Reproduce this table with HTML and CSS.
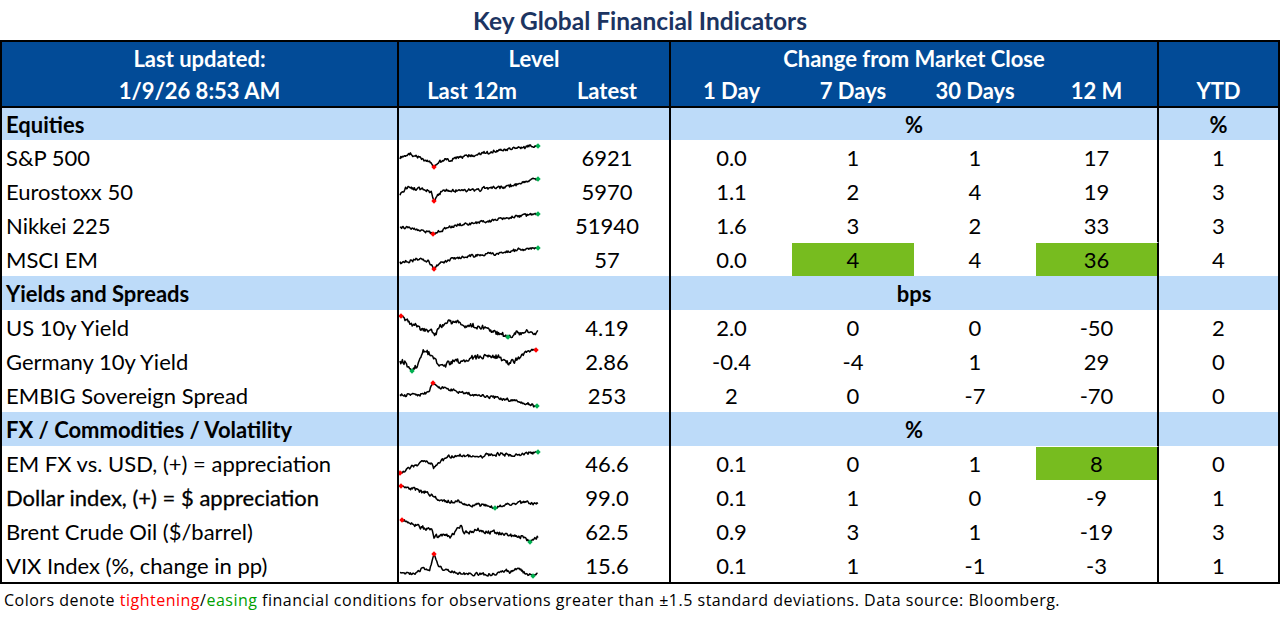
FILE: index.html
```html
<!DOCTYPE html>
<html lang="en">
<head>
<meta charset="utf-8">
<title>Key Global Financial Indicators</title>
<link rel="stylesheet" href="styles.css">
</head>
<body>
<h1 class="title">Key Global Financial Indicators</h1>
<div class="sheet">
  <div class="head">
    <div class="c br">Last updated:</div>
    <div class="c br span2">Level</div>
    <div class="c br span4">Change from Market Close</div>
    <div class="c"></div>
    <div class="c br">1/9/26 8:53 AM</div>
    <div class="c">Last 12m</div>
    <div class="c br">Latest</div>
    <div class="c">1 Day</div>
    <div class="c">7 Days</div>
    <div class="c">30 Days</div>
    <div class="c br">12 M</div>
    <div class="c">YTD</div>
  </div>

  <div class="row sec first">
    <div class="c lbl br b">Equities</div>
    <div class="c br span2"></div>
    <div class="c br span4 b">%</div>
    <div class="c b">%</div>
  </div>
  <div class="row">
    <div class="c lbl br">S&amp;P 500</div>
    <div class="c sp"><svg class="spark" width="146" height="34" data-a="0,18 11,15 23,19 29,21 34,27 38,23 44,20 64,17 91,12 118,8 138,6" data-r="34,27" data-g="138,6" data-n="1.3"></svg></div>
    <div class="c br">6921</div>
    <div class="c">0.0</div><div class="c">1</div><div class="c">1</div><div class="c br">17</div><div class="c">1</div>
  </div>
  <div class="row">
    <div class="c lbl br">Eurostoxx 50</div>
    <div class="c sp"><svg class="spark" width="146" height="34" data-a="0,22 6,14 18,14 28,16 31,18 34,27 38,20 44,16 74,17 91,14 118,11 138,5" data-r="34,27" data-g="138,5" data-n="1.5"></svg></div>
    <div class="c br">5970</div>
    <div class="c">1.1</div><div class="c">2</div><div class="c">4</div><div class="c br">19</div><div class="c">3</div>
  </div>
  <div class="row">
    <div class="c lbl br">Nikkei 225</div>
    <div class="c sp"><svg class="spark" width="146" height="34" data-a="0,19 11,20 24,23 33,26 41,22 58,17 91,13 118,8 138,6" data-r="33,26" data-g="138,6" data-n="1.3"></svg></div>
    <div class="c br">51940</div>
    <div class="c">1.6</div><div class="c">3</div><div class="c">2</div><div class="c br">33</div><div class="c">3</div>
  </div>
  <div class="row">
    <div class="c lbl br">MSCI EM</div>
    <div class="c sp"><svg class="spark" width="146" height="34" data-a="0,21 18,17 28,19 34,27 39,21 58,16 91,12 118,8 138,6" data-r="34,27" data-g="138,6" data-n="1.3"></svg></div>
    <div class="c br">57</div>
    <div class="c">0.0</div><div class="c hi">4</div><div class="c">4</div><div class="c br hi">36</div><div class="c">4</div>
  </div>

  <div class="row sec">
    <div class="c lbl br b">Yields and Spreads</div>
    <div class="c br span2"></div>
    <div class="c br span4 b">bps</div>
    <div class="c"></div>
  </div>
  <div class="row">
    <div class="c lbl br">US 10y Yield</div>
    <div class="c sp"><svg class="spark" width="146" height="34" data-a="1,6 11,13 21,18 31,20 34,25 41,15 51,12 64,15 84,18 98,23 108,27 118,23 128,22 138,22" data-r="1,6" data-g="108,27" data-n="2.2"></svg></div>
    <div class="c br">4.19</div>
    <div class="c">2.0</div><div class="c">0</div><div class="c">0</div><div class="c br">-50</div><div class="c">2</div>
  </div>
  <div class="row">
    <div class="c lbl br">Germany 10y Yield</div>
    <div class="c sp"><svg class="spark" width="146" height="34" data-a="0,18 6,19 12,27 18,21 23,6 31,11 41,23 51,18 64,16 84,13 98,13 108,19 118,13 128,8 136,6" data-r="136,6" data-g="12,27" data-n="2.2"></svg></div>
    <div class="c br">2.86</div>
    <div class="c">-0.4</div><div class="c">-4</div><div class="c">1</div><div class="c br">29</div><div class="c">0</div>
  </div>
  <div class="row">
    <div class="c lbl br">EMBIG Sovereign Spread</div>
    <div class="c sp"><svg class="spark" width="146" height="34" data-a="0,17 18,17 28,15 33,5 38,9 51,12 74,17 98,20 118,24 137,28" data-r="33,5" data-g="137,28" data-n="1.3"></svg></div>
    <div class="c br">253</div>
    <div class="c">2</div><div class="c">0</div><div class="c">-7</div><div class="c br">-70</div><div class="c">0</div>
  </div>

  <div class="row sec">
    <div class="c lbl br b">FX / Commodities / Volatility</div>
    <div class="c br span2"></div>
    <div class="c br span4 b">%</div>
    <div class="c"></div>
  </div>
  <div class="row">
    <div class="c lbl br">EM FX vs. USD, (+) = appreciation</div>
    <div class="c sp"><svg class="spark" width="146" height="34" data-a="0,27 11,21 24,16 31,17 34,23 38,16 48,11 64,9 78,11 91,9 118,9 138,6" data-r="0,27" data-g="138,6" data-n="1.4"></svg></div>
    <div class="c br">46.6</div>
    <div class="c">0.1</div><div class="c">0</div><div class="c">1</div><div class="c br hi">8</div><div class="c">0</div>
  </div>
  <div class="row">
    <div class="c lbl br semi">Dollar index, (+) = $ appreciation</div>
    <div class="c sp"><svg class="spark" width="146" height="34" data-a="1,6 18,10 31,15 41,21 58,21 74,25 84,24 95,28 108,24 121,22 138,23" data-r="1,6" data-g="95,28" data-n="1.4"></svg></div>
    <div class="c br">99.0</div>
    <div class="c">0.1</div><div class="c">1</div><div class="c">0</div><div class="c br">-9</div><div class="c">1</div>
  </div>
  <div class="row">
    <div class="c lbl br">Brent Crude Oil ($/barrel)</div>
    <div class="c sp"><svg class="spark" width="146" height="34" data-a="2,6 14,11 24,14 31,14 34,23 44,21 51,23 61,11 64,18 78,16 91,18 108,21 121,23 130,28 138,24" data-r="2,6" data-g="130,28" data-n="1.6"></svg></div>
    <div class="c br">62.5</div>
    <div class="c">0.9</div><div class="c">3</div><div class="c">1</div><div class="c br">-19</div><div class="c">3</div>
  </div>
  <div class="row">
    <div class="c lbl br">VIX Index (%, change in pp)</div>
    <div class="c sp"><svg class="spark" width="146" height="34" data-a="0,25 14,25 24,19 29,24 34,6 38,17 44,22 58,25 91,27 106,22 110,25 119,20 124,25 133,28 138,26" data-r="34,6" data-g="133,28" data-n="1.2"></svg></div>
    <div class="c br">15.6</div>
    <div class="c">0.1</div><div class="c">1</div><div class="c">-1</div><div class="c br">-3</div><div class="c">1</div>
  </div>
</div>
<p class="note">Colors denote <span class="tight">tightening</span>/<span class="ease">easing</span> financial conditions for observations greater than ±1.5 standard deviations. Data source: Bloomberg.</p>
<script src="script.js"></script>
</body>
</html>
```
FILE: styles.css
```css
* { box-sizing: border-box; }
html, body { margin: 0; padding: 0; background: #fff; }
body {
  font-family: "Lato", "Liberation Sans", sans-serif;
  color: #000;
  width: 1280px;
}
.title {
  margin: 0;
  height: 40px;
  display: flex;
  align-items: center;
  justify-content: center;
  font-size: 24.5px;
  font-weight: 700;
  color: #1c3461;
}
.sheet {
  width: 1280px;
  border: 2px solid #000;
  font-size: 22px;
}
.head, .row {
  display: grid;
  grid-template-columns: 397px 146px 126px 121px 122px 122px 123px 1fr;
}
.head {
  grid-template-rows: 32px 32px;
  background: #024b97;
  color: #fff;
  font-weight: 700;
  border-bottom: 2px solid #000;
}
.row { height: 34px; }
.row.first { height: 32px; }
.sec { background: #bddbf9; }
.c {
  display: flex;
  align-items: center;
  justify-content: center;
  white-space: nowrap;
  min-width: 0;
}
.lbl { justify-content: flex-start; padding-left: 4px; }
.br { border-right: 2px solid #000; }
.b { font-weight: 700; }
.semi { font-weight: 400; -webkit-text-stroke: 0.3px #000; }
.span2 { grid-column: span 2; }
.span4 { grid-column: span 4; }
.sp { justify-content: flex-start; align-items: stretch; }
.spark { display: block; }
.hi { background: #77bc1f; border-top: 1px solid #fff; }
.note {
  margin: 6px 0 0 4px;
  font-family: "Open Sans", "Noto Sans", sans-serif;
  font-size: 16px;
  letter-spacing: 0.5px;
  line-height: 20px;
  color: #000;
}
.tight { color: #ff0000; }
.ease { color: #00a000; }
```
FILE: script.js
```js
(function () {
  var NS = "http://www.w3.org/2000/svg";
  function rng(seed) {
    return function () {
      seed |= 0; seed = (seed + 0x6D2B79F5) | 0;
      var t = Math.imul(seed ^ (seed >>> 15), 1 | seed);
      t = (t + Math.imul(t ^ (t >>> 7), 61 | t)) ^ t;
      return ((t ^ (t >>> 14)) >>> 0) / 4294967296;
    };
  }
  function pair(s) { return s.split(",").map(Number); }
  function diamond(svg, p, color) {
    var d = 2.7, x = p[0] + 1, y = p[1];
    var poly = document.createElementNS(NS, "polygon");
    poly.setAttribute("points", x + "," + (y - d) + " " + (x + d) + "," + y + " " + x + "," + (y + d) + " " + (x - d) + "," + y);
    poly.setAttribute("fill", color);
    svg.appendChild(poly);
  }
  var list = document.querySelectorAll("svg.spark");
  for (var k = 0; k < list.length; k++) {
    var svg = list[k];
    var a = svg.getAttribute("data-a").trim().split(/\s+/).map(pair);
    var amp = parseFloat(svg.getAttribute("data-n") || "1");
    var red = pair(svg.getAttribute("data-r"));
    var green = pair(svg.getAttribute("data-g"));
    var r = rng(k * 7919 + 131);
    var pts = [], n = 0, slow = 0, j = 0;
    var x0 = a[0][0], x1 = a[a.length - 1][0];
    for (var x = x0; x <= x1 + 0.001; x += 0.8) {
      while (j < a.length - 2 && x > a[j + 1][0]) j++;
      var p = a[j], q = a[j + 1];
      var t = (x - p[0]) / (q[0] - p[0]);
      if (t < 0) t = 0; if (t > 1) t = 1;
      var y = p[1] + (q[1] - p[1]) * t;
      slow = slow * 0.85 + (r() - 0.5) * amp * 0.6;
      n = n * 0.25 + (r() - 0.5) * amp * 2.0;
      var dm = Math.min(Math.abs(x - red[0]), Math.abs(x - green[0]));
      var f = Math.min(1, dm / 3);
      pts.push((x + 1).toFixed(2) + "," + (y + (n + slow) * f).toFixed(2));
    }
    var pl = document.createElementNS(NS, "polyline");
    pl.setAttribute("points", pts.join(" "));
    pl.setAttribute("fill", "none");
    pl.setAttribute("stroke", "#000");
    pl.setAttribute("stroke-width", "1.5");
    pl.setAttribute("stroke-linejoin", "round");
    svg.appendChild(pl);
    diamond(svg, red, "#ff0000");
    diamond(svg, green, "#00b050");
  }
})();
```
